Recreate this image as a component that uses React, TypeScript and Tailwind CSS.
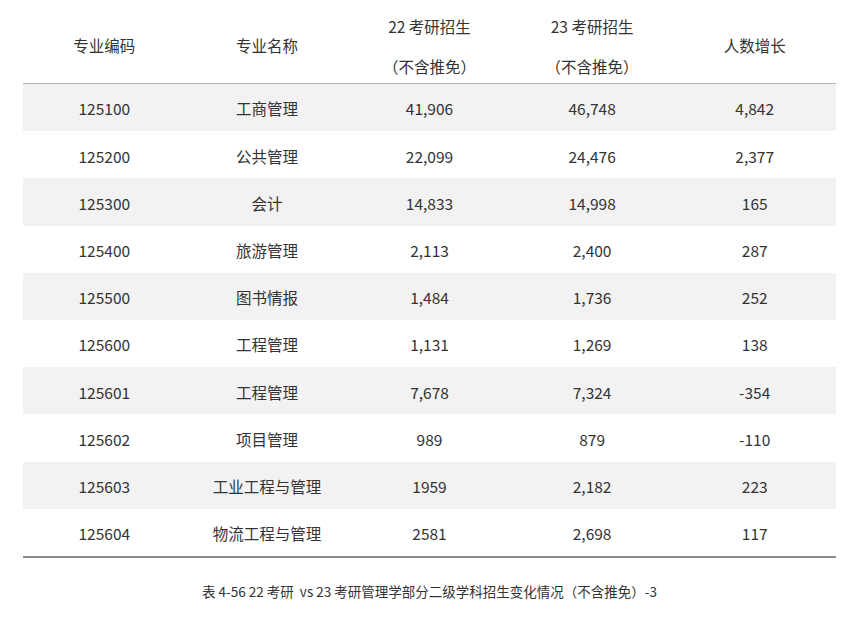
import React from "react";

const rows = [
  ["125100", "工商管理", "41,906", "46,748", "4,842"],
  ["125200", "公共管理", "22,099", "24,476", "2,377"],
  ["125300", "会计", "14,833", "14,998", "165"],
  ["125400", "旅游管理", "2,113", "2,400", "287"],
  ["125500", "图书情报", "1,484", "1,736", "252"],
  ["125600", "工程管理", "1,131", "1,269", "138"],
  ["125601", "工程管理", "7,678", "7,324", "-354"],
  ["125602", "项目管理", "989", "879", "-110"],
  ["125603", "工业工程与管理", "1959", "2,182", "223"],
  ["125604", "物流工程与管理", "2581", "2,698", "117"],
];

export default function App() {
  return (
    <div
      className="w-[864px] h-[622px] bg-white text-[#333333]"
      style={{ fontFamily: '"Noto Sans CJK SC", "Noto Sans", sans-serif' }}
    >
      <div className="mx-[23px] w-[813px]">
        <div className="grid grid-cols-5 h-[84px] border-b border-[#b4b4b4] text-[15.5px] text-center">
          <div className="pt-[33px] leading-[24px]">专业编码</div>
          <div className="pt-[33px] leading-[24px]">专业名称</div>
          <div className="pt-[6px] leading-[40px]">
            <div>22 考研招生</div>
            <div>（不含推免）</div>
          </div>
          <div className="pt-[6px] leading-[40px]">
            <div>23 考研招生</div>
            <div>（不含推免）</div>
          </div>
          <div className="pt-[33px] leading-[24px]">人数增长</div>
        </div>
        <div className="border-b-2 border-[#8c8c8c]">
          {rows.map((r, i) => (
            <div
              key={i}
              className={`grid grid-cols-5 h-[47.2px] items-center pt-[3px] text-[15.5px] text-center ${
                i % 2 === 0 ? "bg-[#f2f2f2]" : "bg-white"
              }`}
            >
              {r.map((c, j) => (
                <div key={j}>{c}</div>
              ))}
            </div>
          ))}
        </div>
        <div className="mt-[23px] text-center text-[13.5px] text-[#333333]">
          表 4-56 22 考研&nbsp;&nbsp;vs 23 考研管理学部分二级学科招生变化情况（不含推免）-3
        </div>
      </div>
    </div>
  );
}
